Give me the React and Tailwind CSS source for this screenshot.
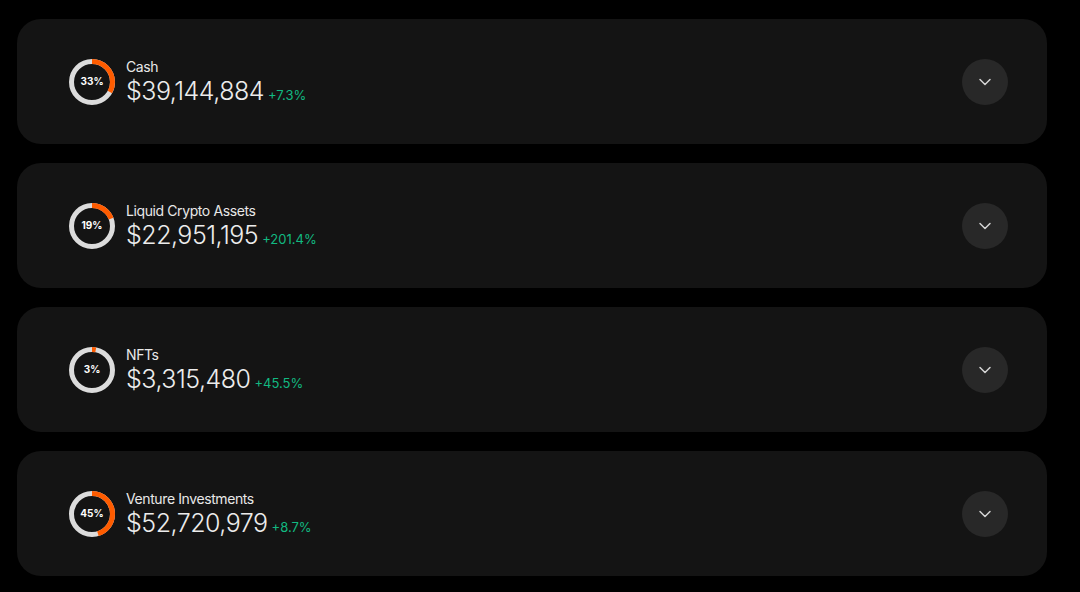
import { ChevronDown } from 'lucide-react'

const rows = [
  { label: 'Cash', pct: 33, value: '$39,144,884', change: '+7.3%' },
  { label: 'Liquid Crypto Assets', pct: 19, value: '$22,951,195', change: '+201.4%' },
  { label: 'NFTs', pct: 3, value: '$3,315,480', change: '+45.5%' },
  { label: 'Venture Investments', pct: 45, value: '$52,720,979', change: '+8.7%' },
]

function Donut({ pct }) {
  const r = 20.5
  const c = 2 * Math.PI * r
  return (
    <div className="relative h-[46px] w-[46px] shrink-0">
      <svg width="46" height="46" viewBox="0 0 46 46" className="-rotate-90">
        <circle cx="23" cy="23" r={r} fill="none" stroke="#dcdcdc" strokeWidth="5" />
        <circle
          cx="23"
          cy="23"
          r={r}
          fill="none"
          stroke="#ff5c00"
          strokeWidth="5"
          strokeDasharray={`${(pct / 100) * c} ${c}`}
        />
      </svg>
      <span className="absolute inset-0 flex items-center justify-center text-[10px] font-bold text-white">
        {pct}%
      </span>
    </div>
  )
}

export default function App() {
  return (
    <div className="min-h-[592px] w-full bg-black pt-[19px] font-['Inter',sans-serif]">
      <div className="flex w-[1030px] flex-col gap-[19px] ml-[17px]">
        {rows.map((row) => (
          <div key={row.label} className="flex h-[125px] items-center justify-between rounded-[24px] bg-[#141414] pl-[52px] pr-[39px]">
            <div className="flex items-center gap-[11px]">
              <Donut pct={row.pct} />
              <div className="flex flex-col">
                <span className="text-[14px] leading-[18px] tracking-[-0.4px] text-[#e8e8e8]">{row.label}</span>
                <div className="flex items-baseline gap-[4px]">
                  <span className="text-[25px] leading-[30px] font-light text-[#ececec] tracking-[-0.5px]">{row.value}</span>
                  <span className="text-[13px] text-[#12b981]">{row.change}</span>
                </div>
              </div>
            </div>
            <button className="flex h-[46px] w-[46px] items-center justify-center rounded-full bg-[#282828] text-[#d4d4d4]">
              <ChevronDown size={20} strokeWidth={1.8} />
            </button>
          </div>
        ))}
      </div>
    </div>
  )
}
